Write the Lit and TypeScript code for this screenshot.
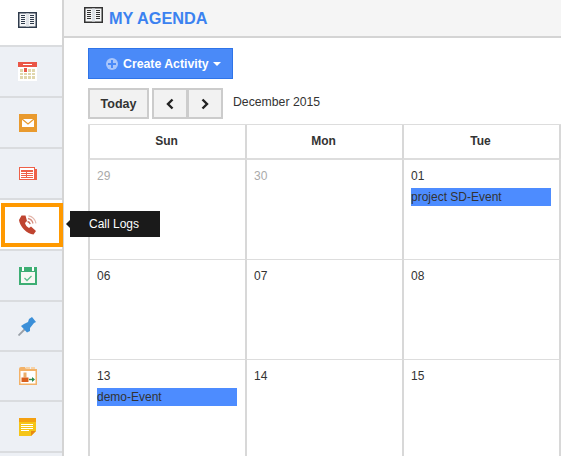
import { LitElement, html, css, svg } from "lit";
import { customElement } from "lit/decorators.js";

const book = (c: string, page: string) => svg`<rect x="0.75" y="0.75" width="17.5" height="14.5" fill="${page}" stroke="${c}" stroke-width="1.5"/><rect x="8" y="1.5" width="3" height="13" fill="#dfe3e8"/><g stroke="${c}" stroke-width="1"><path d="M3 3.500h4M3 5.500h4M3 7.500h4M3 9.500h4M3 11.500h4M12 3.500h4M12 5.500h4M12 7.500h4M12 9.500h4M12 11.500h4"/></g>`;

const icons = [
  html`<svg width="19" height="16" viewBox="0 0 19 16">${book("#2f3b4c", "#f4f5f6")}</svg>`,
  html`<svg width="19" height="19" viewBox="0 0 19 19"><rect width="19" height="19" fill="#fff"/><rect width="19" height="5" fill="#ea5647"/><rect x="5" y="2" width="9" height="1" fill="#fff"/><g fill="#e0d6ac"><rect x="2" y="7" width="3" height="10"/><rect x="6" y="7" width="3" height="10"/><rect x="10" y="7" width="3" height="10"/><rect x="14" y="7" width="3" height="10"/></g><rect x="6" y="6" width="3" height="4" fill="#ea5647"/><path d="M2 10.500h15M2 13.500h15" stroke="#fff"/></svg>`,
  html`<svg width="18" height="18" viewBox="0 0 18 18"><rect width="18" height="18" fill="#e99a2e"/><path d="M3 5h12v8H3z" fill="#fff"/><path d="M3 5l6 5 6-5" fill="none" stroke="#e99a2e" stroke-width="1.200"/></svg>`,
  html`<svg width="18" height="13" viewBox="0 0 18 13"><rect x="14" y="2" width="4" height="11" fill="#ee6048"/><rect x="0.500" y="0.500" width="15" height="12" fill="#fff" stroke="#ee6048"/><rect x="2" y="3" width="12" height="2" fill="#ee6048"/><path d="M2 6.500h12M2 8.500h12M2 10.500h12M7.500 5v6" stroke="#ee6048"/></svg>`,
  html`<svg width="18" height="20" viewBox="0 0 18 20"><path d="M2.500 .5L6.500 .5L8 6L6 8C6.500 10 8 12 10 13L12 11.500L17 16L14.500 19.500C8 19.500 .5 11 0 5Z" fill="#bf4430"/><path d="M8.500 6.500c1.300.3 2.400 1.400 2.700 2.700" fill="none" stroke="#c86a58" stroke-width="1.300"/><path d="M9 3.500c2.500.5 4.500 2.500 5 5" fill="none" stroke="#d58f80" stroke-width="1.300"/><path d="M9.500 .8c3.800.5 7 3.700 7.500 7.500" fill="none" stroke="#e3b5aa" stroke-width="1.200"/></svg>`,
  html`<svg width="18" height="18" viewBox="0 0 18 18"><rect width="18" height="18" fill="#3eae74"/><rect x="2" y="5" width="14" height="11" fill="#f8f8f4"/><rect x="3" y="0" width="2" height="4" fill="#fff"/><rect x="13" y="0" width="2" height="4" fill="#fff"/><path d="M5.500 11l2.500 2.500 4.500-4.500" fill="none" stroke="#5cc08a" stroke-width="1.300"/></svg>`,
  html`<svg width="19" height="19" viewBox="0 0 19 19"><path d="M.5 18.500L7 12" stroke="#9aa0a8" stroke-width="1.800"/><path d="M14 0L18 5L16 6L12 11L12 14L9 15.500L3 9L6 7L10 5L11 2Z" fill="#3b8fd8"/></svg>`,
  html`<svg width="18" height="18" viewBox="0 0 18 18"><path d="M0 2q0-2 2-2h4l1 2h11v16H0z" fill="#f3b268"/><path d="M7 0h4v2H7zM12 0h4v2h-4z" fill="#f6d3a8"/><rect x="1.500" y="4" width="15" height="12.500" fill="#fff"/><rect x="4.500" y="5.500" width="3" height="5" fill="#ecae6a"/><rect x="2.500" y="10.500" width="7" height="4.500" fill="#d9601e"/><path d="M10 12.500h5" stroke="#2e8b4e" stroke-width="1.400"/><path d="M13 10l3 2.500-3 2.500z" fill="#2e8b4e"/></svg>`,
  html`<svg width="17" height="18" viewBox="0 0 17 18"><path d="M0 0h17v13l-5 5H0z" fill="#f5c518"/><rect width="17" height="4" fill="#f4a010"/><path d="M2 6.500h12M2 8.500h12M2 10.500h12M2 12.500h8" stroke="#fff"/><path d="M12 18v-5h5z" fill="#e88a12"/></svg>`,
];

@customElement("app-root")
export class AppRoot extends LitElement {
  static styles = css`
    :host { display: block; width: 561px; height: 456px; overflow: hidden; font-family: "Liberation Sans", Arial, sans-serif; color: #333; background: #fff; }
    .page { display: flex; height: 456px; }
    .side { width: 62px; flex: none; border-right: 2px solid #d4d4d4; background: #edf0f5; }
    .item { height: 49px; border-bottom: 2px solid #dadcdf; display: flex; align-items: center; justify-content: center; position: relative; padding-right: 7px; }
    .item.short { height: 48px; }
    .item.top { height: 40px; padding-bottom: 5px; }
    .item.white { background: #fff; }
    .hl { position: absolute; left: 1px; top: 3px; width: 54px; height: 36px; border: 4px solid #ff9900; }
    .tip { position: absolute; left: 70px; top: 11px; width: 90px; height: 26px; box-sizing: border-box; padding-left: 19px; background: #1a1a1a; color: #fff; font-size: 12px; line-height: 26px; z-index: 2; }
    .tip::before { content: ""; position: absolute; left: -4px; top: 9px; border: 4px solid transparent; border-left: 0; border-right-color: #1a1a1a; }
    .main { flex: 1; min-width: 0; }
    .head { height: 36px; background: #f5f5f5; border-bottom: 2px solid #d4d4d4; padding-left: 20px; display: flex; align-items: flex-start; gap: 6px; }
    .head svg { margin-top: 7px; }
    .head h1 { margin: 9px 0 0; font-size: 16.300px; line-height: 18px; color: #3b82f0; font-weight: bold; }
    .body { padding: 10px 0 0 24px; }
    .create { box-sizing: border-box; width: 145px; height: 31px; background: #4a8af8; border: 1px solid #2f74e8; color: #fff; font-size: 12.300px; font-weight: bold; display: flex; align-items: center; padding-left: 17px; gap: 5px; }
    .plus { width: 12px; height: 12px; border-radius: 50%; background: #a9c6fb; position: relative; }
    .plus::before { content: ""; position: absolute; left: 2px; top: 5px; width: 8px; height: 2px; background: #4a8af8; }
    .plus::after { content: ""; position: absolute; left: 5px; top: 2px; width: 2px; height: 8px; background: #4a8af8; }
    .caret { width: 0; height: 0; border: 4px solid transparent; border-top-color: #fff; border-bottom: 0; margin-left: -1px; }
    .nav { display: flex; align-items: flex-start; margin-top: 9px; height: 36px; }
    .btn { box-sizing: border-box; height: 31px; border: 2px solid #ccc; background: #f2f2f2; display: flex; align-items: center; justify-content: center; font-size: 12.500px; font-weight: bold; color: #333; }
    .today { width: 61px; margin-right: 3px; }
    .pn { width: 36px; }
    .pn + .pn { border-left-width: 1px; width: 35px; }
    .date { margin-left: 10px; font-size: 12.250px; line-height: 14px; margin-top: 7px; }
    .cal { display: grid; grid-template-columns: repeat(3, 157px) 20px; grid-template-rows: 35px 100px 100px 100px; border-top: 1px solid #ddd; }
    .cal > div { border-left: 2px solid #d8d8d8; box-sizing: border-box; font-size: 12px; line-height: 17px; }
    .cal .th { border-bottom: 2px solid #ddd; text-align: center; font-weight: bold; line-height: 32px; padding-right: 2px; }
    .cal .cell { border-bottom: 1px solid #ddd; padding: 8px 7px 0; }
    .cal .muted { color: #aaa; }
    .ev { background: #4d8cff; height: 18px; line-height: 19px; width: 140px; margin-top: 3px; color: #333; }
  `;

  render() {
    return html`<div class="page">
      <nav class="side">
        <div class="item top white">${icons[0]}</div>
        <div class="item">${icons[1]}</div>
        <div class="item">${icons[2]}</div>
        <div class="item">${icons[3]}</div>
        <div class="item white">${icons[4]}<div class="hl"></div><div class="tip">Call Logs</div></div>
        <div class="item">${icons[5]}</div>
        <div class="item short">${icons[6]}</div>
        <div class="item short">${icons[7]}</div>
        <div class="item">${icons[8]}</div>
      </nav>
      <main class="main">
        <header class="head"><svg width="19" height="16" viewBox="0 0 19 16">${book("#333", "#f4f5f6")}</svg><h1>MY AGENDA</h1></header>
        <div class="body">
          <div class="create"><span class="plus"></span>Create Activity<span class="caret"></span></div>
          <div class="nav">
            <div class="btn today">Today</div>
            <div class="btn pn"><svg width="8" height="12" viewBox="0 0 8 12"><path d="M6.500 1.500L2 6l4.500 4.500" fill="none" stroke="#222" stroke-width="2.400"/></svg></div>
            <div class="btn pn"><svg width="8" height="12" viewBox="0 0 8 12"><path d="M1.500 1.500L6 6l-4.500 4.500" fill="none" stroke="#222" stroke-width="2.400"/></svg></div>
            <div class="date">December 2015</div>
          </div>
          <div class="cal">
            <div class="th">Sun</div><div class="th">Mon</div><div class="th">Tue</div><div class="th"></div>
            <div class="cell muted">29</div><div class="cell muted">30</div><div class="cell">01<div class="ev">project SD-Event</div></div><div class="cell"></div>
            <div class="cell">06</div><div class="cell">07</div><div class="cell">08</div><div class="cell"></div>
            <div class="cell">13<div class="ev">demo-Event</div></div><div class="cell">14</div><div class="cell">15</div><div class="cell"></div>
          </div>
        </div>
      </main>
    </div>`;
  }
}
